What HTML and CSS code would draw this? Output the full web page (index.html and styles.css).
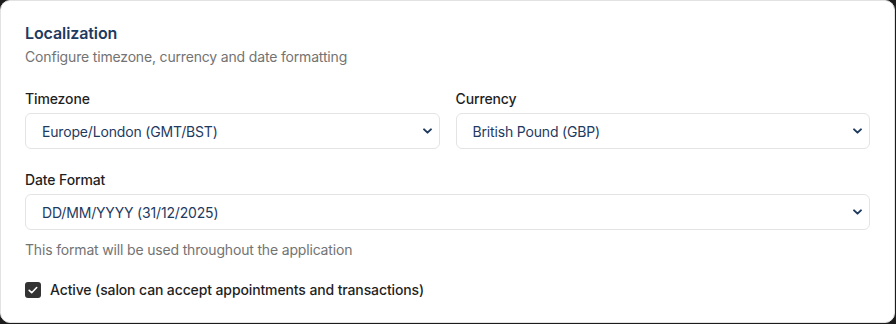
FILE: index.html
```html
<!DOCTYPE html>
<html>
<head>
<meta charset="utf-8">
<link rel="stylesheet" href="styles.css">
</head>
<body>
<div class="card">
  <h2 class="title">Localization</h2>
  <p class="subtitle">Configure timezone, currency and date formatting</p>
  <div class="grid">
    <div class="field">
      <label class="label">Timezone</label>
      <div class="select">
        <span>Europe/London (GMT/BST)</span>
        <svg class="chev" viewBox="0 0 10 6" width="9" height="6"><path d="M1.2 1.2l3.8 3.6 3.8-3.6" fill="none" stroke="#1e3a5f" stroke-width="2.2" stroke-linecap="round" stroke-linejoin="round"/></svg>
      </div>
    </div>
    <div class="field">
      <label class="label">Currency</label>
      <div class="select">
        <span>British Pound (GBP)</span>
        <svg class="chev" viewBox="0 0 10 6" width="9" height="6"><path d="M1.2 1.2l3.8 3.6 3.8-3.6" fill="none" stroke="#1e3a5f" stroke-width="2.2" stroke-linecap="round" stroke-linejoin="round"/></svg>
      </div>
    </div>
  </div>
  <div class="field full">
    <label class="label">Date Format</label>
    <div class="select">
      <span>DD/MM/YYYY (31/12/2025)</span>
      <svg class="chev" viewBox="0 0 10 6" width="9" height="6"><path d="M1.2 1.2l3.8 3.6 3.8-3.6" fill="none" stroke="#1e3a5f" stroke-width="2.2" stroke-linecap="round" stroke-linejoin="round"/></svg>
    </div>
    <p class="help">This format will be used throughout the application</p>
  </div>
  <div class="check-row">
    <span class="checkbox"><svg viewBox="0 0 16 16" width="16" height="16"><path d="M4.2 8.3l2.5 2.4 5-5.2" fill="none" stroke="#fff" stroke-width="1.6" stroke-linecap="round" stroke-linejoin="round"/></svg></span>
    <span class="check-label">Active (salon can accept appointments and transactions)</span>
  </div>
</div>
</body>
</html>
```
FILE: styles.css
```css
html, body {
  margin: 0;
  padding: 0;
  background: #1c1c1c;
}
body {
  font-family: Inter, "Noto Sans", sans-serif;
  width: 896px;
  height: 324px;
  overflow: hidden;
}
.card {
  box-sizing: border-box;
  width: 895px;
  height: 323px;
  background: #fff;
  border: 1px solid #e2e2e2;
  border-radius: 10px;
  padding: 20px 24px 0 24px;
}
.title {
  margin: 0;
  font-size: 16px;
  line-height: 24px;
  font-weight: 600;
  color: #1e3a5f;
  letter-spacing: -0.1px;
}
.subtitle {
  margin: 2px 0 0;
  font-size: 14px;
  line-height: 20px;
  color: #737373;
  letter-spacing: -0.17px;
}
.grid {
  display: grid;
  grid-template-columns: 1fr 1fr;
  gap: 16px;
  margin-top: 22px;
}
.field {
  display: flex;
  flex-direction: column;
}
.full {
  margin-top: 21px;
}
.label {
  font-size: 14px;
  line-height: 20px;
  font-weight: 500;
  color: #1f1f1f;
  margin-bottom: 4px;
  letter-spacing: -0.12px;
}
.select {
  box-sizing: border-box;
  height: 36px;
  border: 1px solid #e4e4e4;
  border-radius: 6px;
  display: flex;
  align-items: center;
  justify-content: space-between;
  padding: 0 7px 0 16px;
  font-size: 14px;
  color: #1e3a5f;
  background: #fff;
  letter-spacing: -0.17px;
}
.chev {
  display: block;
}
.help {
  margin: 10px 0 0;
  font-size: 14px;
  line-height: 20px;
  color: #737373;
  letter-spacing: -0.17px;
}
.check-row {
  display: flex;
  align-items: center;
  gap: 9px;
  margin-top: 20px;
}
.checkbox {
  width: 16px;
  height: 16px;
  border-radius: 3px;
  background: #333;
  display: block;
}
.checkbox svg { display: block; }
.check-label {
  font-size: 14px;
  line-height: 20px;
  font-weight: 500;
  color: #1f1f1f;
  letter-spacing: -0.12px;
}
```
